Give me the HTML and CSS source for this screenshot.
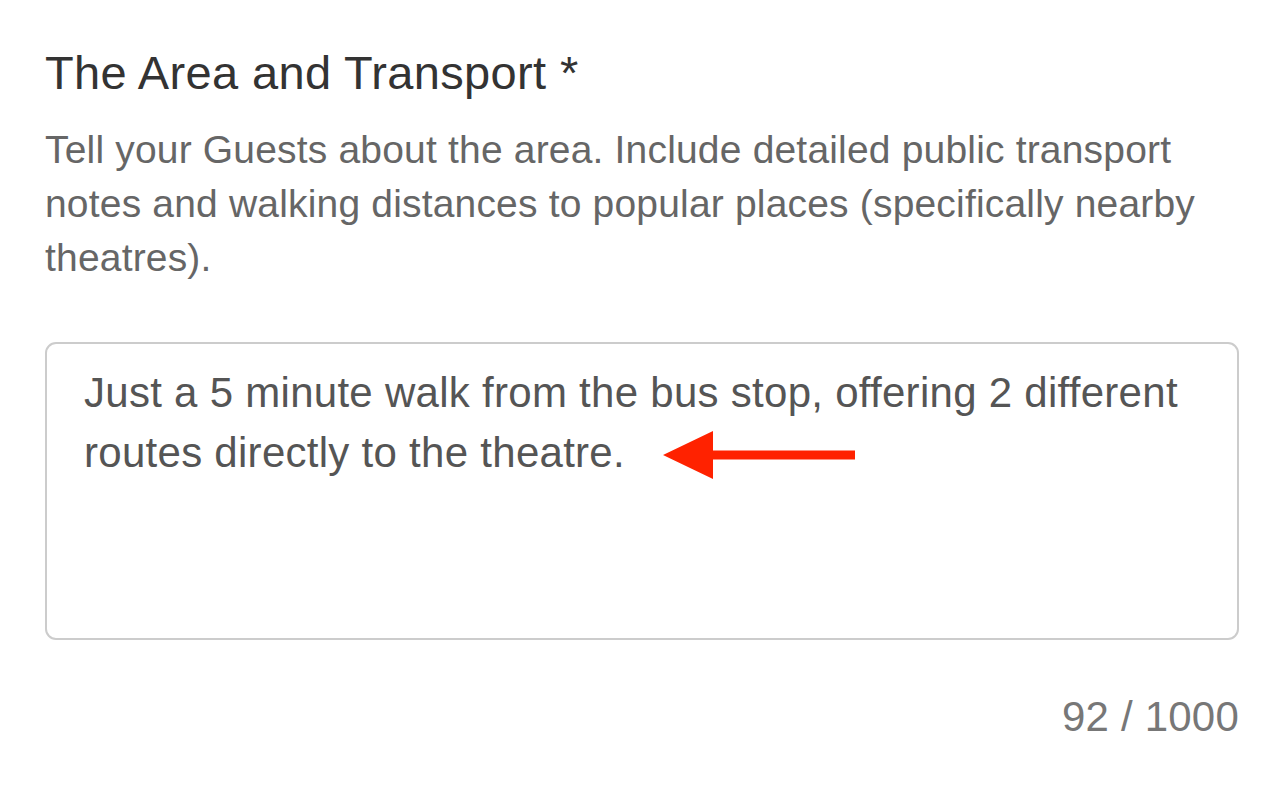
FILE: index.html
```html
<!DOCTYPE html>
<html lang="en">
<head>
<meta charset="utf-8">
<title>The Area and Transport</title>
<link rel="stylesheet" href="styles.css">
</head>
<body>
<section class="field">
  <h2 class="field-title">The Area and Transport *</h2>
  <p class="field-help">Tell your Guests about the area. Include detailed public transport notes and walking distances to popular places (specifically nearby theatres).</p>
  <div class="textbox">
    <p class="textbox-text">Just a 5 minute walk from the bus stop, offering 2 different routes directly to the theatre.<span class="arrow"><svg width="192" height="50" viewBox="0 0 192 50"><path d="M0 25 L50 1 L50 20.5 L192 20.5 L192 29.5 L50 29.5 L50 49 Z" fill="#ff2200"/></svg></span></p>
  </div>
  <div class="counter">92 / 1000</div>
</section>
</body>
</html>
```
FILE: styles.css
```css
html, body {
  margin: 0;
  padding: 0;
  background: #ffffff;
}
body {
  font-family: "Liberation Sans", Arial, sans-serif;
}
.field {
  padding: 45px 45px 0 45px;
  display: flex;
  flex-direction: column;
}
.field-title {
  margin: 0;
  font-weight: normal;
  font-size: 47px;
  line-height: 56px;
  letter-spacing: 0.35px;
  color: #333333;
}
.field-help {
  margin: 22px 0 0 0;
  font-size: 39px;
  line-height: 54px;
  letter-spacing: 0.18px;
  color: #666666;
}
.textbox {
  box-sizing: border-box;
  margin-top: 57px;
  height: 298px;
  border: 2px solid #cccccc;
  border-radius: 11px;
  padding: 19px 36px 17px 37px;
}
.textbox-text {
  margin: 0;
  font-size: 42px;
  line-height: 60px;
  letter-spacing: 0.28px;
  color: #555555;
}
.arrow {
  display: inline-block;
  margin-left: 38px;
  vertical-align: -13px;
  line-height: 0;
}
.counter {
  margin-top: 52px;
  align-self: flex-end;
  font-size: 42px;
  line-height: 50px;
  letter-spacing: 0.2px;
  color: #777777;
}
```
